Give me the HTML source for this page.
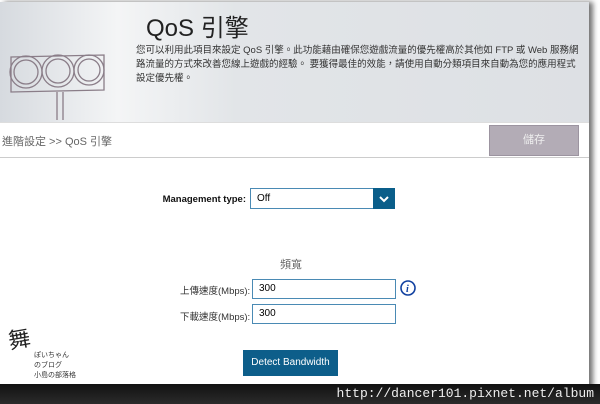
<!DOCTYPE html>
<html><head><meta charset="utf-8"><style>
body{margin:0;width:600px;height:404px;background:#fff;position:relative;overflow:hidden;font-family:"Liberation Sans","Noto Sans CJK TC",sans-serif}
.page{position:absolute;left:0;top:2px;width:589px;height:400px;background:#fff;box-shadow:4px 0 5px rgba(0,0,0,.55)}
.hdr{position:absolute;left:0;top:0;width:589px;height:120px;background:linear-gradient(90deg,#d6dadf 0%,#f4f5f6 20%,#e2e5e8 40%,#dde0e4 100%)}
.t{position:absolute;font-size:11px;color:#333}
.bc{position:absolute;left:0;top:120px;width:589px;height:34px;border-bottom:1px solid #ccc;border-top:1px solid #ddd}
.in{position:absolute;height:20px;border:1px solid #4a8ab4;background:#fff;font-size:10px;box-sizing:border-box;padding:3px 0 0 6px}
.foot{position:absolute;left:0;top:384px;width:600px;height:20px;background:linear-gradient(#111,#2b2b2b)}
</style></head><body>
<div class="page">
<div class="hdr">
<svg style="position:absolute;left:8px;top:40px" width="100" height="80" viewBox="0 0 100 80" fill="none" stroke="#8a7d88" stroke-width="1.3">
<path d="M3 15 L96 13 L96 48 L3 50 Z"/>
<circle cx="18" cy="30" r="16"/><circle cx="18" cy="30" r="12"/>
<circle cx="50" cy="29" r="16"/><circle cx="50" cy="29" r="12"/>
<circle cx="81" cy="28" r="15"/><circle cx="81" cy="28" r="11"/>
<path d="M49 50 L49 78 M55 50 L55 78"/></svg>
<div class="t" style="left:146px;top:6px;font-size:24px;color:#222">QoS 引擎</div>
<div class="t" style="left:136px;top:42px;font-size:9.5px;line-height:14px;width:447px;color:#333">您可以利用此項目來設定 QoS 引擎。此功能藉由確保您遊戲流量的優先權高於其他如 FTP 或 Web 服務網路流量的方式來改善您線上遊戲的經驗。 要獲得最佳的效能，請使用自動分類項目來自動為您的應用程式設定優先權。</div>
</div>
<div class="bc"><div class="t" style="left:2px;top:10px;font-size:11px;color:#666">進階設定 &gt;&gt; QoS 引擎</div>
<div style="position:absolute;left:489px;top:2px;width:90px;height:31px;background:#b3acb6;border:1px solid #9c94a0;box-sizing:border-box;color:#eee;font-size:11px;text-align:center;line-height:29px">儲存</div></div>
<div class="t" style="left:120px;width:126px;text-align:right;top:192px;font-size:9.5px;font-weight:bold;color:#111">Management type:</div>
<div class="in" style="left:250px;top:186px;width:145px;height:21px;padding-top:4px">Off</div>
<div style="position:absolute;left:373px;top:186px;width:22px;height:21px;background:#0a5e8a"><svg width="22" height="21"><path d="M7 9 L11 13 L15 9" stroke="#fff" stroke-width="2" fill="none"/></svg></div>
<div class="t" style="left:280px;top:254px;font-size:11px;color:#666">頻寬</div>
<div class="t" style="left:180px;top:281px;font-size:9.5px;color:#333">上傳速度(Mbps):</div>
<div class="in" style="left:252px;top:277px;width:144px">300</div>
<svg style="position:absolute;left:400px;top:278px" width="16" height="16"><circle cx="8" cy="8" r="7" fill="#fff" stroke="#1040a0" stroke-width="1.6"/><text x="6" y="12" font-size="10" font-style="italic" font-weight="bold" fill="#1040a0" font-family="Liberation Serif">i</text></svg>
<div class="t" style="left:180px;top:307px;font-size:9.5px;color:#333">下載速度(Mbps):</div>
<div class="in" style="left:252px;top:302px;width:144px">300</div>
<div style="position:absolute;left:243px;top:348px;width:95px;height:26px;background:#0d5e8a;color:#fff;font-size:10px;text-align:center;line-height:26px">Detect Bandwidth</div>
<div class="t" style="left:8px;top:320px;font-size:22px;color:#222;font-family:'Noto Sans CJK TC',sans-serif;transform:rotate(-10deg)">舞</div>
<div class="t" style="left:34px;top:348px;font-size:7px;color:#333">ぽいちゃん<br>のブログ<br>小島の部落格</div>
</div>
<div class="foot"><div style="position:absolute;right:6px;top:2px;color:#eee;font-family:'Liberation Mono',monospace;font-size:13px">http://dancer101.pixnet.net/album</div></div>
</body></html>
